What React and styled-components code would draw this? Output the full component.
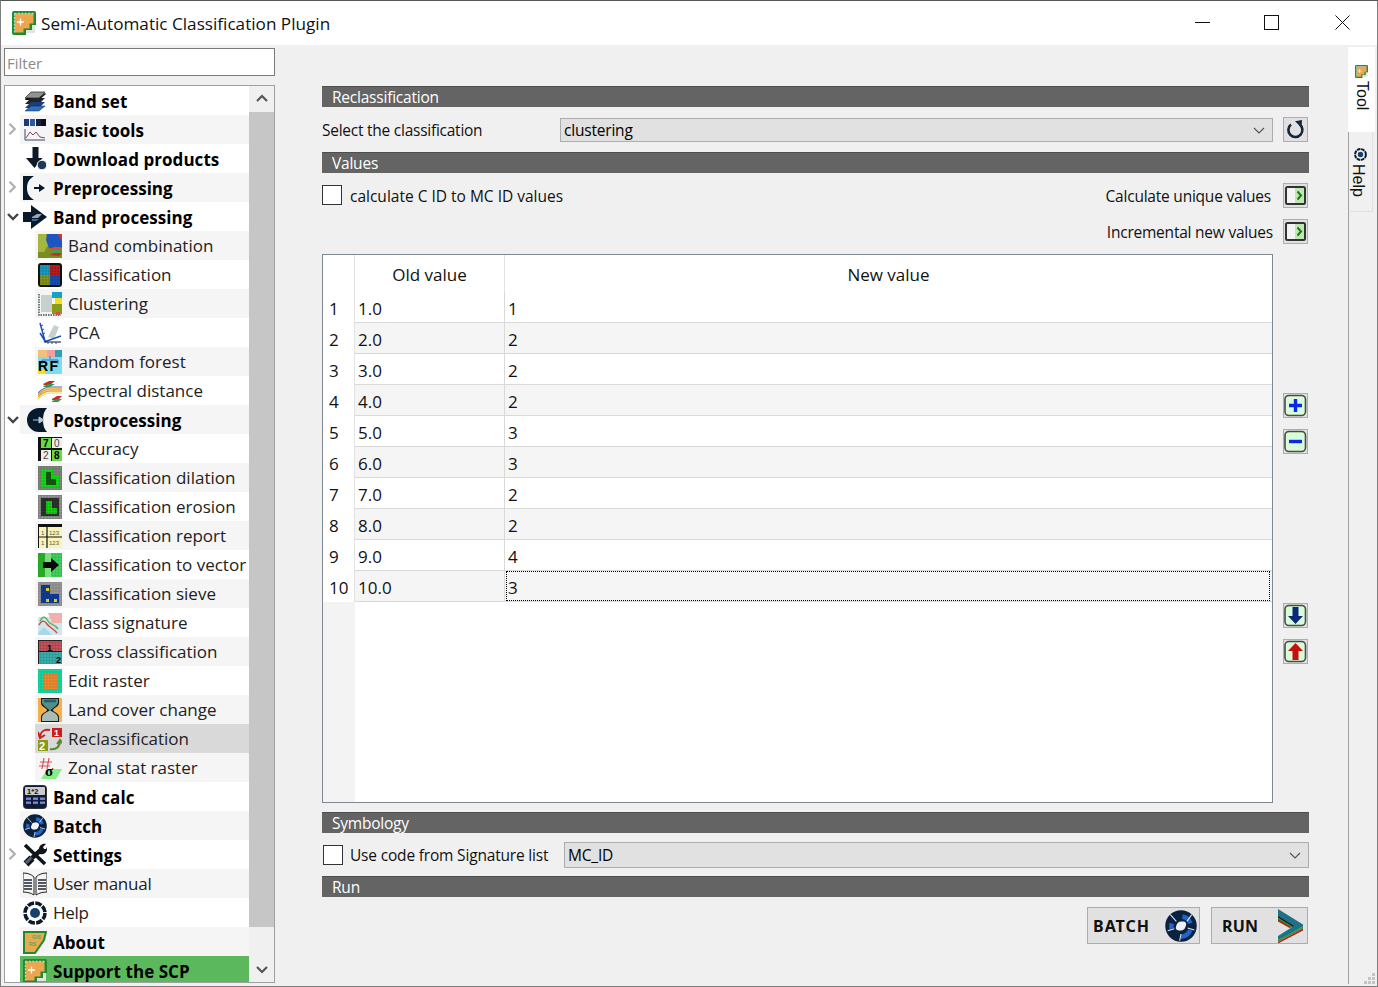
import styled, { createGlobalStyle } from "styled-components";

const GlobalStyle = createGlobalStyle`
  html, body {
    margin: 0;
    padding: 0;
    background: #f0f0f0;
  }
  * {
    box-sizing: border-box;
  }
`;

const uiFont = `"Open Sans", "Noto Sans", "Liberation Sans", sans-serif`;

const Window = styled.div`
  width: 1378px;
  height: 987px;
  display: flex;
  flex-direction: column;
  overflow: hidden;
  position: relative;
  background: #f0f0f0;
  border: 1px solid #7f7f7f;
  border-top-color: #555;
  color: #000;
  font-family: ${uiFont};
`;

const TitleBar = styled.div`
  height: 44px;
  flex: none;
  background: #fff;
  display: flex;
  align-items: center;
  padding-left: 11px;
`;

const Title = styled.div`
  margin-left: 5px;
  font-size: 17.15px;
  flex: 1;
  color: #111;
`;

const WinButton = styled.div`
  width: 69px;
  height: 43px;
  margin-bottom: 1px;
  margin-right: ${(p) => p.$gap || 0}px;
  display: flex;
  align-items: center;
  justify-content: center;
`;

const Body = styled.div`
  flex: 1;
  display: flex;
  min-height: 0;
`;

const LeftPanel = styled.div`
  width: 271px;
  margin-left: 3px;
  padding-top: 3px;
  padding-bottom: 3px;
  display: flex;
  flex-direction: column;
  flex: none;
`;

const FilterInput = styled.div`
  height: 28px;
  flex: none;
  background: #fff;
  border: 1px solid #7a7a7a;
  color: #8a8a8a;
  font-size: 15px;
  line-height: 28px;
  padding-left: 2px;
`;

const Tree = styled.div`
  margin-top: 9px;
  flex: 1;
  min-height: 0;
  display: flex;
  background: #fff;
  border: 1px solid #a0a0a0;
  overflow: hidden;
`;

const TreeRows = styled.div`
  width: 244px;
  flex: none;
`;

const Row = styled.div`
  height: 29px;
  display: flex;
  align-items: center;
  padding-left: ${(p) => (p.$child ? "30px" : "15px")};
  white-space: nowrap;
  position: relative;
  font-size: 17px;
  font-weight: ${(p) => (p.$bold ? 700 : 400)};
  letter-spacing: ${(p) => (p.$bold ? "0.05px" : p.$child ? "0" : "-0.25px")};
  color: ${(p) => (p.$bold ? "#000" : "#222")};
`;

const RowFill = styled.div`
  display: flex;
  align-items: center;
  flex: 1;
  height: 29px;
  padding-left: 3px;
  background: ${(p) =>
    p.$support ? "#5cb85c" : p.$selected ? "#d9d9d9" : p.$alt ? "#f5f5f5" : "transparent"};
`;

const RowLabel = styled.span`
  margin-left: 6px;
  padding-top: ${(p) => (p.$bold ? "2px" : "0")};
`;

const Expander = styled.span`
  position: absolute;
  left: 2px;
  top: 6px;
  width: 12px;
  height: 16px;
  display: flex;
  align-items: center;
  justify-content: center;
`;

const ScrollBar = styled.div`
  flex: 1;
  display: flex;
  flex-direction: column;
  background: #f0f0f0;
`;

const ScrollEnd = styled.div`
  height: 26px;
  flex: none;
  display: flex;
  align-items: center;
  justify-content: center;
  background: #f0f0f0;
`;

const ScrollThumb = styled.div`
  height: 815px;
  flex: none;
  background: #c6c6c6;
`;

const ScrollTrack = styled.div`
  flex: 1;
`;

const Main = styled.div`
  width: 987px;
  margin-left: 47px;
  padding-top: 41px;
  flex: none;
  display: flex;
  flex-direction: column;
`;

const SectionBar = styled.div`
  height: 21px;
  flex: none;
  background: #646464;
  border-top: 1px solid #4e4e4e;
  color: #fff;
  font-size: 15.5px;
  letter-spacing: -0.22px;
  line-height: 20px;
  padding-left: 10px;
  margin-top: ${(p) => p.$top || 0}px;
`;

const SelectRow = styled.div`
  height: 25px;
  margin-top: 10px;
  display: flex;
  flex: none;
  align-items: center;
  padding-right: 1px;
`;

const FieldLabel = styled.div`
  width: 238px;
  font-size: 15.5px;
  letter-spacing: -0.25px;
  flex: none;
  color: #111;
`;

const Combo = styled.div`
  height: ${(p) => p.$height || 24}px;
  flex: 1;
  display: flex;
  align-items: center;
  justify-content: space-between;
  padding: 0 6px 0 3px;
  background: #e1e1e1;
  border: 1px solid #adadad;
  font-size: 15.5px;
  letter-spacing: -0.2px;
`;

const SquareButton = styled.div`
  width: 25px;
  height: 25px;
  flex: none;
  background: #e1e1e1;
  border: 1px solid #adadad;
  display: flex;
  align-items: center;
  justify-content: center;
  margin-left: ${(p) => p.$left || 0}px;
`;

const ValuesRow = styled.div`
  margin-top: 11px;
  height: 60px;
  flex: none;
  display: flex;
  justify-content: space-between;
  padding-right: 1px;
`;

const CheckLabel = styled.label`
  display: flex;
  flex: none;
  align-items: center;
  height: 24px;
  width: ${(p) => (p.$width ? `${p.$width}px` : "auto")};
  font-size: 15.5px;
  letter-spacing: ${(p) => p.$spacing}px;
  color: #111;
`;

const CheckBox = styled.span`
  width: 20px;
  height: 20px;
  flex: none;
  margin-left: ${(p) => p.$left || 0}px;
  margin-right: ${(p) => p.$right}px;
  margin-bottom: ${(p) => p.$up || 0}px;
  background: #fff;
  border: 1px solid #333;
  display: block;
`;

const ValueActions = styled.div`
  display: flex;
  flex-direction: column;
  gap: 11px;
  margin-top: -1px;
`;

const ValueAction = styled.div`
  display: flex;
  align-items: center;
  justify-content: flex-end;
  gap: ${(p) => p.$gap}px;
  font-size: 15.5px;
  letter-spacing: -0.22px;
  color: #111;
`;

const TableArea = styled.div`
  margin-top: 10px;
  height: 549px;
  flex: none;
  display: flex;
`;

const Table = styled.div`
  width: 951px;
  flex: none;
  background: #fff;
  border: 1px solid #7f8790;
  display: grid;
  grid-template-columns: 32px 150px 1fr;
  grid-template-rows: 37px repeat(10, 31px) 1fr;
  font-size: 17px;
`;

const HeaderCell = styled.div`
  display: flex;
  align-items: center;
  justify-content: center;
  padding-top: 1px;
  background: #fff;
  border-right: ${(p) => (p.$last ? "none" : "1px solid #e3e3e3")};
  color: #111;
`;

const RowHead = styled.div`
  display: flex;
  align-items: center;
  padding-left: 6px;
  padding-top: 2px;
  background: #fff;
  border-right: 1px solid #e3e3e3;
  color: #111;
`;

const Cell = styled.div`
  display: flex;
  align-items: center;
  position: relative;
  padding-left: 3px;
  padding-top: 2px;
  background: ${(p) => (p.$alt ? "#f5f5f5" : "#fff")};
  border-bottom: 1px solid #d9d9d9;
  border-right: ${(p) => (p.$last ? "none" : "1px solid #d9d9d9")};
  color: #111;
`;

const FocusFrame = styled.span`
  position: absolute;
  left: 1px;
  right: 2px;
  top: 0;
  bottom: 0;
  border: 1px dotted #000;
`;

const CornerFill = styled.div`
  background: #f3f3f3;
`;

const EmptyFill = styled.div`
  grid-column: span 2;
  background: #fff;
`;

const SideButtons = styled.div`
  margin-left: 10px;
  padding: 139px 0;
  display: flex;
  flex-direction: column;
  justify-content: space-between;
`;

const ButtonGroup = styled.div`
  display: flex;
  flex-direction: column;
  gap: 11px;
`;

const CheckRow = styled.div`
  height: 26px;
  margin-top: 9px;
  flex: none;
  display: flex;
  align-items: center;
`;

const RunRow = styled.div`
  margin-top: 10px;
  height: 37px;
  flex: none;
  display: flex;
  justify-content: flex-end;
  gap: 11px;
  padding-right: 1px;
`;

const RunButton = styled.div`
  width: ${(p) => p.$width}px;
  height: 37px;
  background: #e1e1e1;
  border: 1px solid #adadad;
  display: flex;
  align-items: center;
  justify-content: space-between;
  padding: 0 ${(p) => p.$right}px 0 ${(p) => p.$left}px;
  font-weight: 700;
  font-size: 16px;
  letter-spacing: ${(p) => p.$spacing}px;
  color: #111;
  font-family: "Noto Sans", sans-serif;
`;

const TabRail = styled.div`
  margin-left: 39px;
  margin-bottom: 2px;
  padding-top: 2px;
  width: 28px;
  flex: none;
  display: flex;
  flex-direction: column;
`;

const ToolTab = styled.div`
  height: 85px;
  width: 27px;
  background: #fff;
  display: flex;
  flex-direction: column;
  align-items: center;
  padding-top: 18px;
`;

const TabRest = styled.div`
  flex: 1;
  border-left: 1px solid #a0a0a0;
`;

const HelpTab = styled.div`
  height: 80px;
  width: 25px;
  background: #f0f0f0;
  border-left: 1px solid #a0a0a0;
  border-right: 1px solid #e0e0e0;
  border-bottom: 1px solid #e0e0e0;
  display: flex;
  flex-direction: column;
  align-items: center;
  padding-top: 16px;
`;

const TabText = styled.span`
  writing-mode: vertical-rl;
  font-family: "Liberation Sans", Arial, sans-serif;
  font-size: 16px;
  margin-top: 3px;
  margin-right: ${(p) => p.$shift || 0}px;
  line-height: 16px;
  color: #111;
`;

const SizeGrip = styled.svg`
  position: absolute;
  right: 1px;
  bottom: 1px;
`;

const gridLines = (x, y, w, h, step, color) => {
  const out = [];
  for (let i = 0; i <= w; i += step) {
    out.push(<path key={"v" + i} d={`M${x + i} ${y}v${h}`} stroke={color} strokeWidth=".6" />);
  }
  for (let i = 0; i <= h; i += step) {
    out.push(<path key={"h" + i} d={`M${x} ${y + i}h${w}`} stroke={color} strokeWidth=".6" />);
  }
  return out;
};

const Svg = ({ size = 24, box = 24, children, ...rest }) => (
  <svg width={size} height={size} viewBox={`0 0 ${box} ${box}`} style={{ flex: "none" }} {...rest}>
    {children}
  </svg>
);

const Logo = () => (
  <>
    <path d="M2 0h20a2 2 0 0 1 2 2v12h-4v5h-6v5H2a2 2 0 0 1-2-2V2a2 2 0 0 1 2-2z" fill="#1f8a2e" />
    <path d="M20 14h3v8h-9v-3h6z" fill="#dfe6e0" />
    <path d="M2.5 2.5h19v10h-4v5h-6v4h-9z" fill="#eda64e" />
    <path d="M2.5 2.5h19M2.5 2.5v19" stroke="#9fe4d4" strokeWidth="1.3" strokeDasharray="2 1.4" fill="none" />
    <path d="M8.5 7.5v7M5 11h7" stroke="#fff" strokeWidth="1.3" />
  </>
);

const BatchRing = () => (
  <>
    <circle cx="12" cy="12" r="7.6" fill="none" stroke="#0c2140" strokeWidth="8.4" />
    <circle cx="12" cy="12" r="10.2" fill="none" stroke="#f0f0f000" strokeWidth="1" />
    <path d="M13 5a7 7 0 0 1 6 5M19 15a8 8 0 0 1-7 5M5 14a7 7 0 0 1 0-4" fill="none" stroke="#1f66c8" strokeWidth="3.4" />
    <path d="M4 3.5l4.5 5M20 3.5l-3.5 5M2 15.5l5-1.5M22 15l-5-1.5M11 23l1-5" stroke="#dfe6ee" strokeWidth=".8" />
    <ellipse cx="12" cy="12" rx="4.4" ry="2.7" fill="#eef2f6" transform="rotate(-35 12 12)" />
  </>
);

const icons = {
  bandset: (
    <>
      <path d="M8 3h14l-6 6H2z" fill="#8e9492" stroke="#222" strokeWidth=".7" />
      <path d="M3 9l-1 2h14l7-6-1-1-6 5z" fill="#111" />
      <path d="M8 9h14l-6 6H2z" fill="#20242c" />
      <path d="M8 13h14l-6 6H2z" fill="#1b3d7a" />
      <path d="M8 17h14l-6 5H2z" fill="#2f6fc0" stroke="#123" strokeWidth=".5" />
    </>
  ),
  basic: (
    <>
      <rect x="1" y="1" width="5" height="7" fill="#1a3a78" />
      <rect x="7" y="1" width="5" height="7" fill="#2a5aa5" />
      <rect x="13" y="1" width="5" height="7" fill="#16213a" />
      <rect x="18" y="1" width="5" height="7" fill="#0a0f18" />
      <path d="M2 11v11h20" stroke="#3a4a6a" fill="none" />
      <path d="M3 20l4-6 3 3 3-3 4 5 5 1" stroke="#7d4a5c" fill="none" />
    </>
  ),
  download: (
    <>
      <path d="M9.5 0h6v11h4l-8 10-8.500-10h6.500z" fill="#0e1a28" />
      <circle cx="19" cy="18" r="4.800" fill="#1d3a5a" stroke="#fff" />
    </>
  ),
  pre: (
    <>
      <path d="M0 0h11C6 3 4 7 4 12s2 9 7 12H0z" fill="#071a2c" />
      <path d="M11 12h7" stroke="#071a2c" strokeWidth="2" />
      <path d="M16 8l6 4-6 4z" fill="#071a2c" />
    </>
  ),
  proc: (
    <>
      <path d="M8 0l16 12-16 12V17H0V7h8z" fill="#071a2c" />
      <path d="M9 12l5-3h5l-4 4H9z" fill="#9aa8b8" />
      <path d="M9 14h7l-3 2H9z" fill="#3a6aa8" />
    </>
  ),
  combo: (
    <>
      <rect width="24" height="24" fill="#7a8c22" />
      <path d="M0 0h8l4 8-6 10H0z" fill="#a4b63c" />
      <path d="M9 0h12l3 5v9H11l-3-8z" fill="#1e55c0" />
      <path d="M20 0h4v8z" fill="#d8362a" />
      <path d="M11 15l5-2h8l-3 3z" fill="#e0483a" />
      <path d="M11 18l5-2h8l-3 3z" fill="#36a84a" />
      <path d="M11 21l5-2h8l-3 3z" fill="#c82a2a" />
    </>
  ),
  classif: (
    <>
      <rect width="24" height="24" rx="3" fill="#111" />
      <rect x="2" y="2" width="10" height="10" fill="#1aa0c8" />
      <rect x="12" y="2" width="10" height="10" fill="#c01e1e" />
      <rect x="2" y="12" width="10" height="10" fill="#8a9a18" />
      <rect x="12" y="12" width="10" height="10" fill="#1a50b8" />
      {gridLines(2, 2, 20, 20, 3, "#00000040")}
    </>
  ),
  clustering: (
    <>
      <rect x="3" y="3" width="11" height="17" fill="#c8d0cc" />
      <path d="M1 2v21h22" stroke="#444" fill="none" strokeDasharray="1.5 1" strokeWidth="1.4" />
      <rect x="14" y="0" width="10" height="6" fill="#1aa0c8" />
      <rect x="17" y="6" width="7" height="6" fill="#f0e020" />
      <rect x="14" y="12" width="10" height="10" fill="#8a9a18" />
      <rect x="18" y="20" width="4" height="3" fill="#d05050" />
    </>
  ),
  pca: (
    <>
      <path d="M10 16l6-12 5 2-5 12z" fill="#b8c4c0" opacity=".8" />
      <path d="M2 2l5 18M6 21l17-6M7 20L2 12" stroke="#1a50b8" strokeWidth="1.5" fill="none" />
      <path d="M7 21h16" stroke="#111" strokeWidth="1" />
      <path d="M3 5l2-1M4 9l2-1M5 13l2-1M10 21v2M14 21v2M18 21v2" stroke="#1a50b8" />
    </>
  ),
  rf: (
    <>
      <rect width="24" height="24" fill="#7fdcec" />
      <rect x="0" y="0" width="9" height="7" fill="#f3c07c" />
      <rect x="9" y="0" width="8" height="7" fill="#f0a0a0" />
      <rect x="17" y="0" width="7" height="7" fill="#30a0b0" />
      <path d="M12 6v3M4 14V10h16v4" stroke="#3f6fc0" fill="none" />
      <rect x="0" y="20" width="7" height="4" fill="#f0e020" />
      <text x="0" y="20.800" letterSpacing="1.500" fontFamily="Liberation Sans, sans-serif" fontWeight="700" fontSize="14" fill="#000">
        RF
      </text>
    </>
  ),
  spectral: (
    <>
      <path d="M5 5l6-3h6l-5 4H6z" fill="#c82a2a" />
      <path d="M5 7l6-2h6l-5 3H6z" fill="#2aa048" />
      <path d="M0 16c5-5 8-6 12-6h12M0 18c5-5 8-6 12-6h12" stroke="#f0a030" strokeWidth="1.3" fill="none" />
      <path d="M0 14c5-5 8-6 12-6h12" stroke="#3f6fc0" strokeWidth="1.2" fill="none" />
      <path d="M0 20c5-5 8-6 12-6h12" stroke="#e0e040" strokeWidth="1.2" fill="none" />
      <path d="M14 20l5-3h5l-4 4h-6z" fill="#c82a2a" />
      <path d="M14 22l5-2h5l-4 3h-6z" fill="#2aa048" />
    </>
  ),
  post: (
    <>
      <path d="M16 0A12 12 0 0 0 16 24h8c-3-3-4-7-4-12s1-9 4-12z" fill="#071a2c" />
      <path d="M10 12h6V9l5 3-5 3v-3" fill="#b8c8dc" stroke="#b8c8dc" />
    </>
  ),
  accuracy: (
    <>
      <rect width="24" height="24" fill="#111" />
      <rect x="3" y="1" width="10" height="10" fill="#6ad840" />
      <rect x="14" y="1" width="10" height="10" fill="#eee" />
      <rect x="3" y="13" width="10" height="11" fill="#eee" />
      <rect x="14" y="13" width="10" height="11" fill="#6ad840" />
      <text x="5" y="10" fontSize="10" fontFamily="Liberation Sans, sans-serif" fontWeight="700">7</text>
      <text x="16" y="10" fontSize="10" fontFamily="Liberation Sans, sans-serif" fill="#444">0</text>
      <text x="5" y="22" fontSize="10" fontFamily="Liberation Sans, sans-serif" fill="#444">2</text>
      <text x="16" y="22" fontSize="10" fontFamily="Liberation Sans, sans-serif" fontWeight="700">8</text>
    </>
  ),
  dilation: (
    <>
      <rect width="24" height="24" fill="#7c8a7c" />
      <path d="M3 3h12v6h6v12H3z" fill="#12e012" />
      <path d="M8 6h5v7h5v6H8z" fill="#145a14" />
      {gridLines(0, 0, 24, 24, 3, "#00000030")}
    </>
  ),
  erosion: (
    <>
      <rect width="24" height="24" fill="#9a9a9a" />
      <rect x="3" y="3" width="18" height="18" fill="#333" />
      <path d="M8 6h6v7h5v6H8z" fill="#12e012" />
      {gridLines(0, 0, 24, 24, 3, "#00000055")}
    </>
  ),
  report: (
    <>
      <rect width="24" height="24" fill="#111" />
      <rect x="1" y="3" width="23" height="21" fill="#f6f4b8" />
      <path d="M9 0v24M0 13h24" stroke="#111" strokeWidth="1.2" />
      <text x="3" y="11" fontSize="6" fontFamily="Liberation Sans, sans-serif" fill="#555">1</text>
      <text x="11" y="11" fontSize="6" fontFamily="Liberation Sans, sans-serif" fill="#555">123</text>
      <text x="3" y="21" fontSize="6" fontFamily="Liberation Sans, sans-serif" fill="#555">1</text>
      <text x="11" y="21" fontSize="6" fontFamily="Liberation Sans, sans-serif" fill="#555">123</text>
    </>
  ),
  vector: (
    <>
      <rect width="7" height="24" fill="#28a828" />
      <rect x="7" width="6" height="24" fill="#7ae07a" />
      <rect x="13" width="11" height="24" fill="#22c040" />
      {gridLines(13, 0, 11, 24, 3, "#ffffff50")}
      <path d="M5 9h8V5l8 7-8 7v-4H5z" fill="#0a0a0a" />
    </>
  ),
  sieve: (
    <>
      <rect width="24" height="24" fill="#9a9a9a" />
      <path d="M3 3h9v9h9v9H3z" fill="#103c9c" />
      <rect x="8" y="6" width="3" height="3" fill="#f0e020" />
      <rect x="8" y="17" width="3" height="3" fill="#f0e020" />
      <rect x="16" y="17" width="3" height="3" fill="#f0e020" />
      {gridLines(0, 0, 24, 24, 3, "#00000030")}
    </>
  ),
  signature: (
    <>
      <rect x="0" y="6" width="24" height="18" fill="#cfe6ee" />
      <path d="M10 2h14v10H14z" fill="#f2b0ac" />
      <path d="M0 22l6-6 8 8H0z" fill="#a8d8ec" />
      <path d="M2 10c3-6 6-4 8 0s6 2 10 8" stroke="#58b458" strokeWidth="1.4" fill="none" />
      <path d="M1 14c3-6 6-4 8-1s6 4 10 9" stroke="#d8443c" strokeWidth="1.4" fill="none" />
    </>
  ),
  cross: (
    <>
      <rect width="24" height="24" fill="#111" />
      <rect x="1" y="1" width="23" height="10" fill="#b03a44" />
      <rect x="1" y="12" width="23" height="12" fill="#1f9a9a" />
      {gridLines(1, 1, 23, 23, 3, "#ffffff40")}
      <text x="9" y="11" fontSize="9" fontFamily="Liberation Sans, sans-serif" fontWeight="700">1</text>
      <text x="18" y="22.500" fontSize="9" fontFamily="Liberation Sans, sans-serif" fontWeight="700">2</text>
    </>
  ),
  edit: (
    <>
      <rect width="24" height="24" fill="#18d8a0" />
      <rect x="6" y="5" width="13" height="15" fill="#f08a30" />
      {gridLines(0, 0, 24, 24, 3, "#00000022")}
    </>
  ),
  land: (
    <>
      <rect width="24" height="24" fill="#f4b04c" />
      <path d="M3 0h18v5c0 4-6 5-6 7s6 3 6 7v5H3v-5c0-4 6-5 6-7S3 9 3 5z" fill="#1a1a1a" />
      <path d="M4 1h16v4c-2 4-6 5-7 7h-2c-1-2-5-3-7-7z" fill="#4f8f8c" />
      <path d="M4 23v-4c1-4 6-5 8-7 2 2 7 3 8 7v4z" fill="#a8bcb6" />
      <path d="M6 3h12" stroke="#1f5f66" strokeWidth="2.500" />
    </>
  ),
  reclass: (
    <>
      <rect x="14" y="1" width="10" height="9" fill="#c81e1e" />
      <text x="16" y="9" fontSize="9" fill="#fff" fontFamily="Liberation Sans, sans-serif" fontWeight="700">1</text>
      <path d="M2 9C3 4 7 2 12 3M0 5l2 6 5-3" stroke="#c81e1e" strokeWidth="2" fill="none" />
      <rect x="0" y="13" width="10" height="11" fill="#8a9a18" />
      <text x="1" y="22.500" fontSize="11" fill="#fff" fontFamily="Liberation Sans, sans-serif" fontWeight="700">2</text>
      <path d="M12 22c6 1 10-2 10-8M19 17l3-4 3 4" stroke="#5a8a28" strokeWidth="2" fill="none" />
    </>
  ),
  zonal: (
    <>
      <path d="M5 20l4-7h15l-6 10H3z" fill="#88ec88" />
      <path d="M2 6h12M1 10h11M6 2L4 13M11 2L9 13" stroke="#d8505c" strokeWidth="1.2" />
      <text x="7" y="20" fontSize="15" fontFamily="Liberation Serif, serif" fontWeight="700" fill="#000">σ</text>
    </>
  ),
  calc: (
    <>
      <rect x="0.5" y="0.5" width="23" height="23" rx="3" fill="#0d1a3a" stroke="#333" />
      <rect x="2" y="2" width="20" height="8" rx="1" fill="#ccc" />
      <text x="4" y="9" fontSize="7.5" fontFamily="Liberation Sans, sans-serif" fontWeight="700" fill="#111">1*2</text>
      {[12.5, 16.5].map((y) =>
        [3, 10, 17].map((x) => <rect key={x + "-" + y} x={x} y={y} width="5" height="2.4" fill="#7a88d0" />)
      )}
    </>
  ),
  batch: <BatchRing />,
  settings: (
    <>
      <path d="M2 2l20 19" stroke="#10151c" strokeWidth="3.600" />
      <path d="M20 5L9 15" stroke="#10151c" strokeWidth="4.400" />
      <path d="M16 6c0-3 3-6 7-5l-3 3 1 2 2 0 1-2c1 5-3 8-7 7z" fill="#10151c" />
      <path d="M9 15l-6 6" stroke="#10151c" strokeWidth="7" />
      <path d="M8 15l-5 5" stroke="#57626e" strokeWidth="3" />
    </>
  ),
  manual: (
    <>
      <path d="M0 1c4 0 8 1 11 4v18c-3-2-7-3-11-3zM24 1c-4 0-8 1-11 4v18c3-2 7-3 11-3z" fill="#f4f4f4" stroke="#222" />
      <path d="M1 8h8M1 11h8M1 14h8M1 17h8M15 8h8M15 11h8M15 14h8M15 17h8" stroke="#1c2630" strokeWidth="1.300" />
    </>
  ),
  help: (
    <>
      <circle cx="12" cy="12" r="10" fill="none" stroke="#0b1a2e" strokeWidth="3.6" strokeDasharray="6.6 1.25" />
      <circle cx="12" cy="12" r="5" fill="#17406e" />
    </>
  ),
  about: (
    <>
      <path d="M1 2h22l-2 8-9 13H1z" fill="#e9a94e" stroke="#1f8a2e" strokeWidth="2" />
      <text x="9" y="9" fontSize="5" fill="#5a6" fontFamily="Liberation Sans, sans-serif">GIS</text>
      <text x="6" y="16" fontSize="5" fill="#5a6" fontFamily="Liberation Sans, sans-serif">RS</text>
    </>
  ),
  support: <Logo />,
};

const treeItems = [
  { label: "Band set", icon: "bandset", bold: true },
  { label: "Basic tools", icon: "basic", bold: true, exp: "right" },
  { label: "Download products", icon: "download", bold: true },
  { label: "Preprocessing", icon: "pre", bold: true, exp: "right" },
  { label: "Band processing", icon: "proc", bold: true, exp: "down" },
  { label: "Band combination", icon: "combo", child: true },
  { label: "Classification", icon: "classif", child: true },
  { label: "Clustering", icon: "clustering", child: true },
  { label: "PCA", icon: "pca", child: true },
  { label: "Random forest", icon: "rf", child: true },
  { label: "Spectral distance", icon: "spectral", child: true },
  { label: "Postprocessing", icon: "post", bold: true, exp: "down" },
  { label: "Accuracy", icon: "accuracy", child: true },
  { label: "Classification dilation", icon: "dilation", child: true },
  { label: "Classification erosion", icon: "erosion", child: true },
  { label: "Classification report", icon: "report", child: true },
  { label: "Classification to vector", icon: "vector", child: true },
  { label: "Classification sieve", icon: "sieve", child: true },
  { label: "Class signature", icon: "signature", child: true },
  { label: "Cross classification", icon: "cross", child: true },
  { label: "Edit raster", icon: "edit", child: true },
  { label: "Land cover change", icon: "land", child: true },
  { label: "Reclassification", icon: "reclass", child: true, selected: true },
  { label: "Zonal stat raster", icon: "zonal", child: true },
  { label: "Band calc", icon: "calc", bold: true },
  { label: "Batch", icon: "batch", bold: true },
  { label: "Settings", icon: "settings", bold: true, exp: "right" },
  { label: "User manual", icon: "manual" },
  { label: "Help", icon: "help" },
  { label: "About", icon: "about", bold: true },
  { label: "Support the SCP", icon: "support", bold: true, support: true },
];

const tableRows = [
  ["1.0", "1"],
  ["2.0", "2"],
  ["3.0", "2"],
  ["4.0", "2"],
  ["5.0", "3"],
  ["6.0", "3"],
  ["7.0", "2"],
  ["8.0", "2"],
  ["9.0", "4"],
  ["10.0", "3"],
];

const Chevron = ({ dir, color = "#333", width = 1.6 }) => {
  const d = {
    down: "M2 5l5 5 5-5",
    up: "M2 9l5-5 5 5",
    right: "M4 2l6 6-6 6",
  }[dir];
  return (
    <Svg size={14} box={dir === "right" ? 16 : 14}>
      <path d={d} fill="none" stroke={color} strokeWidth={width} />
    </Svg>
  );
};

const Expand = ({ dir }) => (
  <Expander>
    {dir === "right" ? <Chevron dir="right" color="#b0b0b0" width={2.6} /> : <Chevron dir="down" color="#444" width={2.4} />}
  </Expander>
);

const GoIcon = () => (
  <Svg size={23} box={23}>
    <rect x="2" y="3" width="19" height="17" rx="1.5" fill="#f4f4f4" stroke="#333" strokeWidth="2" />
    <rect x="11" y="4" width="9" height="15" fill="#bfe8b0" />
    <path d="M13.5 7.5l3.5 4-3.5 4" fill="none" stroke="#1a7a1a" strokeWidth="2" />
  </Svg>
);

const GreenIcon = ({ children }) => (
  <Svg size={23} box={23}>
    <rect x="1" y="1.5" width="20.500" height="20" rx="4" fill="#d8fbd8" stroke="#4a4a4a" strokeWidth="1.6" />
    {children}
  </Svg>
);

const ReloadIcon = () => (
  <Svg size={21} box={21}>
    <path d="M6 5.500A7 7 0 1 0 14.500 5.300" fill="none" stroke="#14263a" strokeWidth="2.600" />
    <path d="M10 2.200L17 1l-.5 7.500z" fill="#14263a" />
  </Svg>
);

const RunIcon = () => (
  <svg width="26" height="34" viewBox="0 0 26 34" style={{ flex: "none" }}>
    <path d="M1 0l25 15.500v2L9 27l-8 4v-4l15-9.500L1 9z" fill="#20708a" />
    <path d="M1 7l16 10-3 1.500L1 11z" fill="#1a1a1a" />
    <path d="M1 8.500l14.500 9-1.500.8L1 10.500z" fill="#2a9a3a" />
    <path d="M1 10.500l13 7.800-1.500.7L1 12.500z" fill="#b01e1e" />
    <path d="M26 17.500v2L1 33v-2z" fill="#2a9a3a" />
    <path d="M26 19.500v2L2 34H1v-1z" fill="#b01e1e" />
  </svg>
);

function TableRow({ index, oldValue, newValue }) {
  const alt = index % 2 === 1;
  return (
    <>
      <RowHead>{index + 1}</RowHead>
      <Cell $alt={alt}>{oldValue}</Cell>
      <Cell $alt={alt} $last>
        {newValue}
        {index === 9 && <FocusFrame />}
      </Cell>
    </>
  );
}

const App = () => (
  <>
    <GlobalStyle />
    <Window>
      <TitleBar>
        <Svg size={24}>
          <Logo />
        </Svg>
        <Title>Semi-Automatic Classification Plugin</Title>
        <WinButton>
          <Svg size={15} box={15}>
            <path d="M0 7.500h15" stroke="#111" />
          </Svg>
        </WinButton>
        <WinButton $gap={2}>
          <Svg size={15} box={15}>
            <rect x="0.5" y="0.5" width="14" height="14" fill="none" stroke="#111" />
          </Svg>
        </WinButton>
        <WinButton>
          <Svg size={15} box={15}>
            <path d="M0.5 0.5l14 14M14.500 0.500l-14 14" stroke="#111" />
          </Svg>
        </WinButton>
      </TitleBar>
      <Body>
        <LeftPanel>
          <FilterInput>Filter</FilterInput>
          <Tree>
            <TreeRows>
              {treeItems.map((item, i) => (
                <Row key={item.label} $child={item.child} $bold={item.bold}>
                  {item.exp && <Expand dir={item.exp} />}
                  <RowFill $alt={i % 2 === 1} $selected={item.selected} $support={item.support}>
                    <Svg size={24}>{icons[item.icon]}</Svg>
                    <RowLabel $bold={item.bold}>{item.label}</RowLabel>
                  </RowFill>
                </Row>
              ))}
            </TreeRows>
            <ScrollBar>
              <ScrollEnd>
                <Chevron dir="up" color="#555" width={2.2} />
              </ScrollEnd>
              <ScrollThumb />
              <ScrollTrack />
              <ScrollEnd>
                <Chevron dir="down" color="#555" width={2.2} />
              </ScrollEnd>
            </ScrollBar>
          </Tree>
        </LeftPanel>
        <Main>
          <SectionBar>Reclassification</SectionBar>
          <SelectRow>
            <FieldLabel>Select the classification</FieldLabel>
            <Combo>
              clustering
              <Chevron dir="down" color="#555" width={1.2} />
            </Combo>
            <SquareButton $left={10}>
              <ReloadIcon />
            </SquareButton>
          </SelectRow>
          <SectionBar $top={10}>Values</SectionBar>
          <ValuesRow>
            <CheckLabel $spacing={0}>
              <CheckBox $right={8} $up={2} />
              calculate C ID to MC ID values
            </CheckLabel>
            <ValueActions>
              <ValueAction $gap={12}>
                Calculate unique values
                <SquareButton>
                  <GoIcon />
                </SquareButton>
              </ValueAction>
              <ValueAction $gap={10}>
                Incremental new values
                <SquareButton>
                  <GoIcon />
                </SquareButton>
              </ValueAction>
            </ValueActions>
          </ValuesRow>
          <TableArea>
            <Table>
              <HeaderCell />
              <HeaderCell>Old value</HeaderCell>
              <HeaderCell $last>New value</HeaderCell>
              {tableRows.map(([oldValue, newValue], i) => (
                <TableRow key={i} index={i} oldValue={oldValue} newValue={newValue} />
              ))}
              <CornerFill />
              <EmptyFill />
            </Table>
            <SideButtons>
              <ButtonGroup>
                <SquareButton>
                  <GreenIcon>
                    <path d="M11.5 5v13M5 11.5h13" stroke="#0a28e8" strokeWidth="3.4" />
                  </GreenIcon>
                </SquareButton>
                <SquareButton>
                  <GreenIcon>
                    <path d="M5 11.5h13" stroke="#0a28e8" strokeWidth="3.4" />
                  </GreenIcon>
                </SquareButton>
              </ButtonGroup>
              <ButtonGroup>
                <SquareButton>
                  <GreenIcon>
                    <path d="M8.5 3h6v9h4.5l-7.5 8-7.5-8h4.5z" fill="#0a2a78" />
                  </GreenIcon>
                </SquareButton>
                <SquareButton>
                  <GreenIcon>
                    <path d="M8.5 20h6v-9h4.5l-7.5-8-7.5 8h4.5z" fill="#c80f0f" />
                  </GreenIcon>
                </SquareButton>
              </ButtonGroup>
            </SideButtons>
          </TableArea>
          <SectionBar $top={9}>Symbology</SectionBar>
          <CheckRow>
            <CheckLabel $spacing={-0.18} $width={242}>
              <CheckBox $left={1} $right={7} />
              Use code from Signature list
            </CheckLabel>
            <Combo $height={26}>
              MC_ID
              <Chevron dir="down" color="#555" width={1.2} />
            </Combo>
          </CheckRow>
          <SectionBar $top={8}>Run</SectionBar>
          <RunRow>
            <RunButton $width={113} $left={5} $right={2} $spacing={1}>
              BATCH
              <Svg size={32}>
                <BatchRing />
              </Svg>
            </RunButton>
            <RunButton $width={97} $left={10} $right={4} $spacing={0.2}>
              RUN
              <RunIcon />
            </RunButton>
          </RunRow>
        </Main>
        <TabRail>
          <ToolTab>
            <Svg size={13}>
              <Logo />
            </Svg>
            <TabText>Tool</TabText>
          </ToolTab>
          <HelpTab>
            <Svg size={13}>{icons.help}</Svg>
            <TabText $shift={5}>Help</TabText>
          </HelpTab>
          <TabRest />
        </TabRail>
      </Body>
      <SizeGrip width="12" height="12" viewBox="0 0 12 12">
        <path d="M8 0h3v3H8zM4 4h3v3H4zM8 4h3v3H8zM0 8h3v3H0zM4 8h3v3H4zM8 8h3v3H8z" fill="#c4c4c4" />
      </SizeGrip>
    </Window>
  </>
);

export default App;
